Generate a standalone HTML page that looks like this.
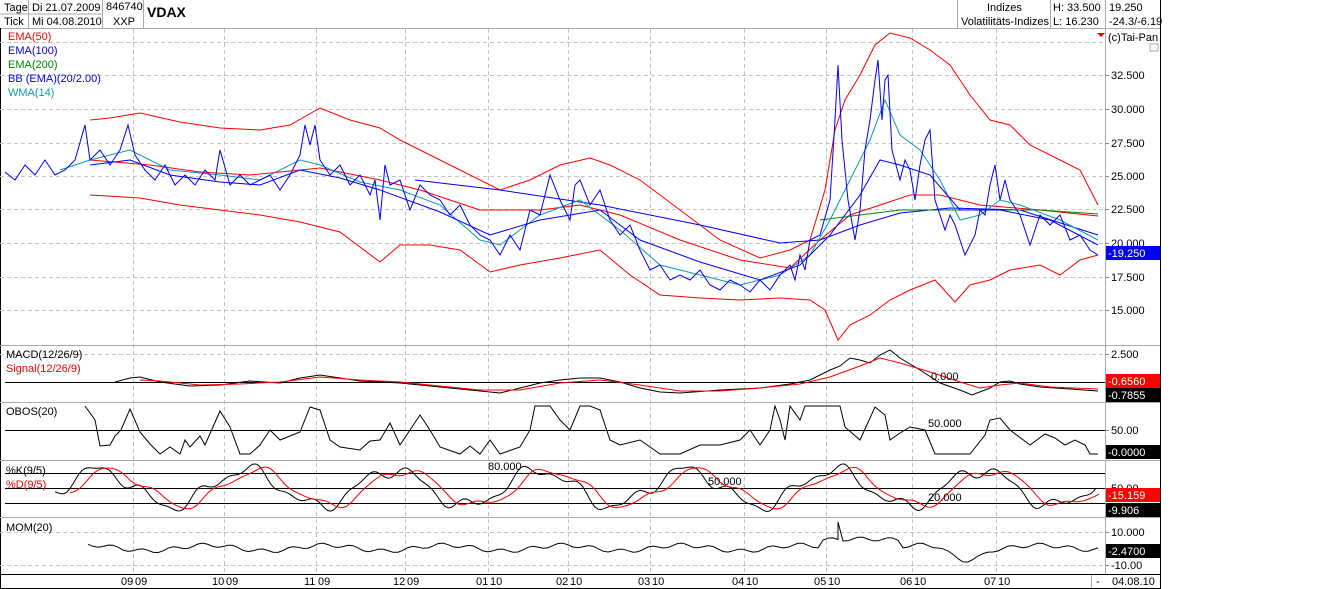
<!DOCTYPE html>
<html><head><meta charset="utf-8"><style>
html,body{margin:0;padding:0;background:#fff;width:1323px;height:589px;overflow:hidden}
svg{display:block;font-family:"Liberation Sans",sans-serif}
</style></head><body>
<svg id="s" width="1323" height="589" xmlns="http://www.w3.org/2000/svg">
<rect x="0" y="0" width="1161" height="589" fill="#fff"/>
<g font-size="11" fill="#000">
<line x1="0" y1="14" x2="103" y2="14" stroke="#aaa"/>
<line x1="0" y1="28.5" x2="1161" y2="28.5" stroke="#aaa"/>
<line x1="28.5" y1="0" x2="28.5" y2="28" stroke="#aaa"/>
<line x1="102.5" y1="0" x2="102.5" y2="28" stroke="#aaa"/>
<line x1="143.5" y1="0" x2="143.5" y2="28" stroke="#aaa"/>
<line x1="957.5" y1="0" x2="957.5" y2="28" stroke="#aaa"/>
<line x1="1050.5" y1="0" x2="1050.5" y2="28" stroke="#aaa"/>
<line x1="1105.5" y1="0" x2="1105.5" y2="28" stroke="#aaa"/>
<text x="4" y="11">Tage</text><text x="4" y="25">Tick</text>
<text x="32" y="11">Di 21.07.2009</text><text x="32" y="25">Mi 04.08.2010</text>
<text x="106" y="10">846740</text><text x="113" y="25">XXP</text>
<text x="147" y="17" font-weight="bold" font-size="14">VDAX</text>
<text x="987" y="11">Indizes</text><text x="961" y="25">Volatilitäts-Indizes</text>
<text x="1053" y="11">H: 33.500</text><text x="1053" y="25">L: 16.230</text>
<text x="1109" y="11">19.250</text><text x="1109" y="25">-24.3/-6.19</text>
</g>
<line x1="1160.5" y1="0" x2="1160.5" y2="589" stroke="#000"/>
<line x1="0.5" y1="28" x2="0.5" y2="589" stroke="#000"/>
<line x1="1105.5" y1="28" x2="1105.5" y2="574" stroke="#aaa"/>
<g id="grid" stroke="#c4c4c4" stroke-dasharray="4,3"></g>
<g stroke="#aaa">
<line x1="0" y1="345.5" x2="1160" y2="345.5"/>
<line x1="0" y1="402.5" x2="1160" y2="402.5"/>
<line x1="0" y1="460.5" x2="1160" y2="460.5"/>
<line x1="0" y1="517.5" x2="1160" y2="517.5"/>
</g>
<line x1="0" y1="574.5" x2="1160" y2="574.5" stroke="#000"/>
<line x1="0" y1="588.5" x2="1160" y2="588.5" stroke="#000"/>
<polygon points="1097,33 1105,33 1101,37" fill="#d00"/>
<rect x="1150" y="44" width="8" height="7" fill="none" stroke="#aaa"/>
<g id="plots" fill="none" stroke-width="1"></g>
<g id="labels" font-size="11"></g>
</svg>
<script>
var ns="http://www.w3.org/2000/svg",S=document.getElementById('s');
function el(p,t,a,txt){var e=document.createElementNS(ns,t);for(var k in a)e.setAttribute(k,a[k]);if(txt!=null)e.textContent=txt;p.appendChild(e);return e;}
var G=document.getElementById('grid'),P=document.getElementById('plots'),L=document.getElementById('labels');
var vx=[133,224,316,405,488,568,650,744,826,912,996];
vx.forEach(function(x){el(G,'line',{x1:x+.5,y1:29,x2:x+.5,y2:574});});
[42,75,109,143,176,209,243,277,310].forEach(function(y){el(G,'line',{x1:0,y1:y+.5,x2:1105,y2:y+.5});});
[354,532,565].forEach(function(y){el(G,'line',{x1:0,y1:y+.5,x2:1105,y2:y+.5});});
[[75,'32.500'],[109,'30.000'],[143,'27.500'],[176,'25.000'],[209,'22.500'],[243,'20.000'],[277,'17.500'],[310,'15.000'],[354,'2.500'],[430,'50.00'],[488,'50.00'],[532,'10.000'],[565,'-10.00']].forEach(function(a){
 el(L,'line',{x1:1105,y1:a[0]+.5,x2:1109,y2:a[0]+.5,stroke:'#888'});el(L,'text',{x:1111,y:a[0]+4,fill:'#000'},a[1]);});
function pl(pts,c){el(P,'polyline',{points:pts.map(function(p){return p.join(',')}).join(' '),stroke:c});}
function pts(s){var a=s.split(/\s+/).filter(Boolean).map(Number),r=[];for(var i=0;i<a.length;i+=2)r.push([a[i],a[i+1]]);return r;}
pl(pts("90 120 110 118 140 113 180 122 220 128 260 130 290 125 320 108 350 120 380 128 400 140 420 150 460 170 500 190 530 180 560 165 590 158 610 165 640 180 680 210 720 240 760 258 790 250 810 240 825 190 835 130 845 100 860 75 875 45 890 33 910 38 930 50 950 65 970 95 990 120 1010 125 1030 145 1060 160 1080 170 1098 205"),'#f00');
pl(pts("90 195 140 198 180 205 220 210 260 215 300 222 340 232 380 262 400 245 430 245 460 250 490 272 520 265 560 258 600 250 630 275 660 295 700 298 740 300 780 298 810 300 825 310 838 340 850 325 870 315 890 300 910 290 935 280 955 302 970 285 990 280 1010 270 1040 265 1060 275 1080 260 1098 255"),'#f00');
pl(pts("90 160 150 165 200 172 250 175 320 168 380 180 420 190 480 210 540 210 580 205 620 215 680 240 740 260 790 268 820 240 850 215 880 205 910 195 940 195 980 205 1040 210 1098 216"),'#f00');
pl(pts("415 180 500 190 600 205 700 225 780 243 820 240 860 225 900 213 950 208 1020 210 1098 235"),'#00f');
pl(pts("820 220 860 215 900 210 960 210 1040 210 1098 214"),'#080');
pl(pts("60 170 90 160 130 150 170 170 220 175 260 180 300 160 320 165 360 182 400 190 440 205 480 240 500 245 540 215 580 200 620 230 660 265 700 275 740 285 780 275 810 255 830 220 850 180 870 140 885 100 900 135 920 150 940 180 960 220 980 215 1000 200 1020 205 1060 220 1098 240"),'#19a');
pl(pts("90 165 130 160 170 175 220 182 260 185 300 170 340 178 380 190 440 212 490 235 540 220 600 210 640 240 700 262 760 280 800 265 830 235 860 195 880 160 900 165 930 175 960 210 1000 210 1050 220 1098 245"),'#00f');
pl(pts("5 172 15 180 25 165 35 175 45 160 55 175 65 170 75 160 85 125 90 160 100 150 110 165 120 150 128 125 135 155 145 170 155 180 165 165 175 185 185 175 195 185 205 170 215 180 220 150 230 185 240 175 250 185 260 180 270 175 280 190 290 175 300 155 305 125 310 145 315 125 320 160 330 175 340 165 350 185 360 175 370 195 375 180 380 220 385 165 390 185 400 180 410 210 420 185 430 195 440 200 450 215 460 205 470 225 480 235 490 240 500 255 510 235 520 250 530 210 540 215 550 175 560 200 570 220 575 185 580 180 590 205 600 190 610 220 620 235 630 225 640 250 650 270 660 265 670 280 680 275 690 280 700 270 710 285 720 290 730 280 740 285 750 292 760 280 770 290 780 275 790 265 795 280 800 255 805 270 810 240 820 235 830 200 835 120 838 65 842 140 848 200 855 240 860 210 865 150 870 120 875 80 878 60 882 120 885 80 888 75 892 150 900 180 905 160 910 170 915 200 920 165 925 140 930 130 935 200 945 230 950 215 955 225 965 255 975 235 980 210 985 215 990 185 995 165 1000 200 1005 180 1010 200 1020 215 1030 245 1040 215 1050 225 1060 215 1070 240 1080 235 1090 250 1098 255"),'#00f');
[382,430,473,488,503].forEach(function(y){el(P,'line',{x1:5,y1:y+.5,x2:1105,y2:y+.5,stroke:'#000'});});
pl(pts("115 382 130 378 140 377 160 382 190 386 220 385 250 381 280 383 300 378 320 375 340 378 360 381 400 383 440 387 480 391 500 393 520 388 540 383 560 380 580 378 600 378 620 382 640 388 660 392 680 393 720 390 760 388 790 384 810 380 830 370 840 366 850 358 860 360 870 363 880 355 890 350 900 358 920 370 940 383 960 390 972 395 990 388 1000 382 1010 381 1020 384 1040 387 1070 389 1098 391"),'#000');
pl(pts("140 380 160 381 200 385 240 384 280 382 320 377 360 380 400 382 440 386 480 390 520 390 560 383 600 380 640 385 680 391 720 391 760 388 800 384 830 377 860 366 880 358 900 363 930 372 960 382 980 388 1000 385 1020 383 1050 387 1098 389"),'#f00');
pl(pts("85 406 95 420 100 446 110 445 115 436 121 430 130 409 140 432 150 444 160 454 170 447 180 454 185 440 190 447 200 436 205 445 220 411 230 427 240 454 250 454 260 445 270 430 280 440 300 432 310 407 320 410 330 440 340 447 360 450 370 441 380 440 390 423 400 445 410 430 420 415 430 430 440 447 460 454 470 446 480 454 490 440 500 454 520 447 530 430 535 406 550 406 560 420 570 430 580 406 590 406 600 410 610 440 620 445 640 440 660 454 680 454 700 445 720 445 740 440 750 430 760 445 770 430 775 406 780 420 785 440 790 406 800 420 805 406 825 406 840 406 845 427 860 440 875 407 885 415 890 440 900 433 910 427 925 430 935 454 945 454 970 454 985 435 990 420 1000 418 1010 430 1030 445 1045 434 1055 438 1065 445 1075 440 1085 445 1090 454 1098 454"),'#000');
var K=[],D=[];
for(var x=55;x<=1098;x+=3){var t=x/14.5;var k=488+18*Math.sin(t*0.62+0.5)+5*Math.sin(t*1.7)+3*Math.sin(t*3.1);k=Math.max(463,Math.min(513,k));K.push([x,k.toFixed(1)]);}
for(var i=0;i<K.length;i++){var s=0,n=0;for(var j=Math.max(0,i-6);j<=i;j++){s+=+K[j][1];n++;}D.push([K[i][0]+3,(s/n).toFixed(1)]);}
pl(K,'#000');pl(D.slice(4),'#f00');
var M=[];for(var x=88;x<=1098;x+=5){var m=548+2*Math.sin(x*0.21)+3*Math.sin(x*0.053);if(x>820&&x<900)m-=6+6*Math.sin((x-820)/80*Math.PI);if(x>940&&x<990)m+=10*Math.sin((x-940)/50*Math.PI);if(x>1040)m+=(1040-x)*0.02;M.push([x,m.toFixed(1)]);}
M.push([838,522]);M.sort(function(a,b){return a[0]-b[0]});pl(M,'#000');
[[8,40,'#f00','EMA(50)'],[8,54,'#00f','EMA(100)'],[8,68,'#080','EMA(200)'],[8,82,'#00f','BB (EMA)(20/2.00)'],[8,96,'#19a','WMA(14)'],[6,358,'#000','MACD(12/26/9)'],[6,372,'#f00','Signal(12/26/9)'],[6,415,'#000','OBOS(20)'],[6,474,'#000','%K(9/5)'],[6,488,'#f00','%D(9/5)'],[6,531,'#000','MOM(20)'],[931,380,'#000','0.000'],[928,427,'#000','50.000'],[488,470,'#000','80.000'],[708,485,'#000','50.000'],[928,501,'#000','20.000'],[1108,41,'#000','(c)Tai-Pan']].forEach(function(a){el(L,'text',{x:a[0],y:a[1],fill:a[2]},a[3]);});
[[246,'#00f','19.250'],[374,'#f00','-0.6560'],[388,'#000','-0.7855'],[445,'#000','0.0000'],[488,'#f00','15.159'],[503,'#000','9.906'],[544,'#000','-2.4700']].forEach(function(a){el(L,'rect',{x:1106,y:a[0],width:54,height:14,fill:a[1]});el(L,'text',{x:1108,y:a[0]+11,fill:'#fff'},a[2].charAt(0)=='-'?a[2]:'-'+a[2]);});
var xl=['09|09','10|09','11|09','12|09','01|10','02|10','03|10','04|10','05|10','06|10','07|10'];
xl.forEach(function(t,i){var p=t.split('|');el(L,'text',{x:vx[i]-12,y:585,fill:'#000'},p[0]);el(L,'text',{x:vx[i]+2,y:585,fill:'#000'},p[1]);});
el(L,'line',{x1:1091.5,y1:575,x2:1091.5,y2:588,stroke:'#aaa'});
el(L,'text',{x:1096,y:585,fill:'#000'},'-');el(L,'text',{x:1112,y:585,fill:'#000'},'04.08.10');
</script>
</body></html>
